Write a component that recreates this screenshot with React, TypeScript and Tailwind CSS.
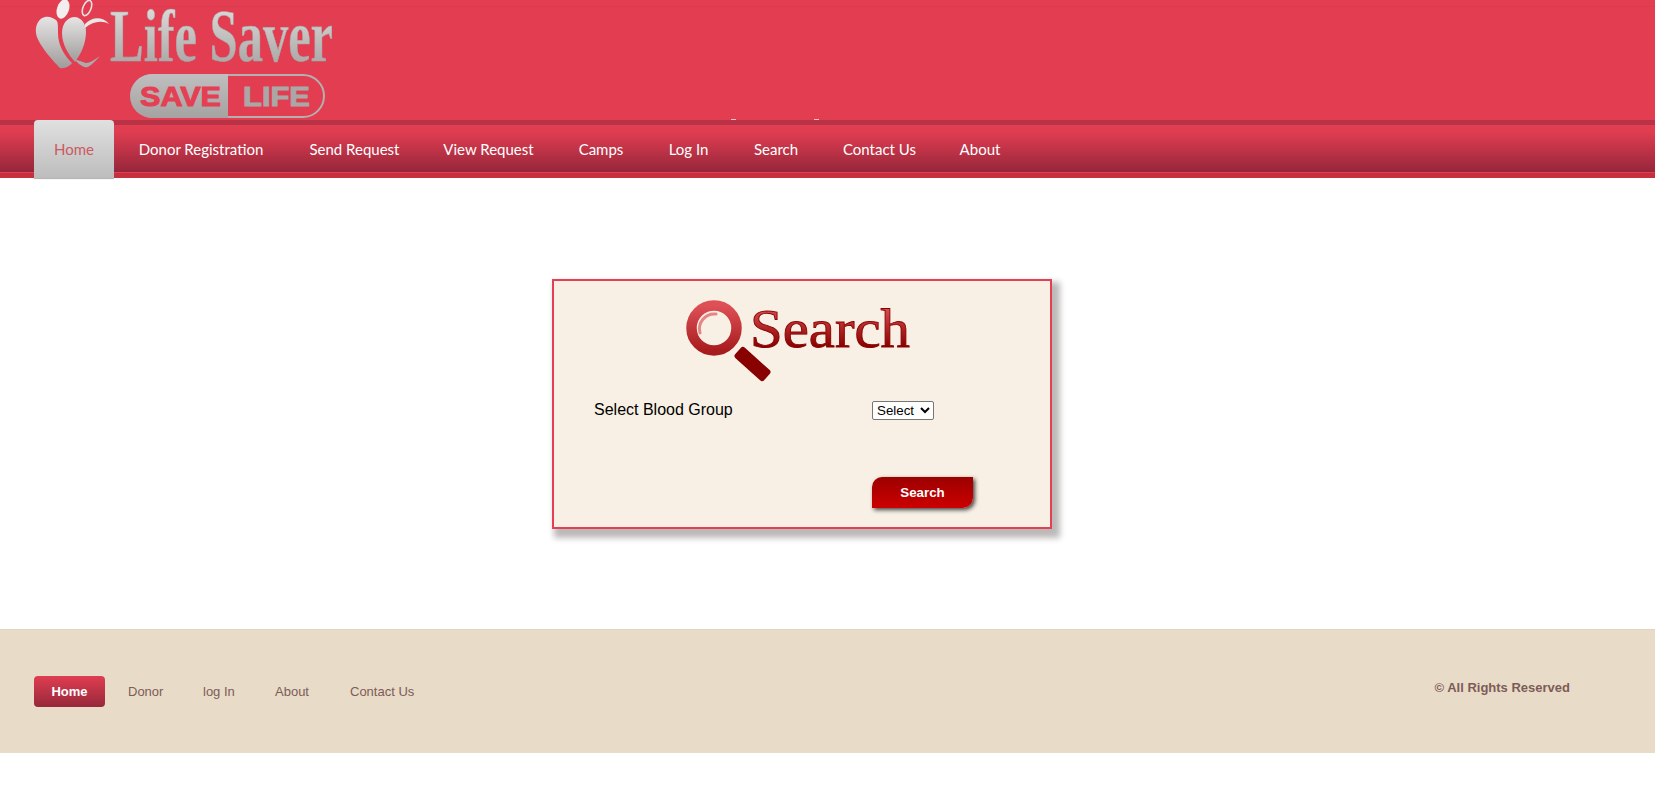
import React from "react";

const navItems = [
  { label: "Donor Registration", cls: "ml-[25px] w-[124px]" },
  { label: "Send Request", cls: "ml-[46px] w-[91px]" },
  { label: "View Request", cls: "ml-[44px] w-[89px]" },
  { label: "Camps", cls: "ml-[45px] w-[46px]" },
  { label: "Log In", cls: "ml-[44px] w-[41px]" },
  { label: "Search", cls: "ml-[44px] w-[46px]" },
  { label: "Contact Us", cls: "ml-[44px] w-[73px]" },
  { label: "About", cls: "ml-[44px] w-[40px]" },
];

const footerItems = [
  { label: "Donor", cls: "ml-[23px] w-[35px]" },
  { label: "log In", cls: "ml-[40px] w-[32px]" },
  { label: "About", cls: "ml-[40px] w-[35px]" },
  { label: "Contact Us", cls: "ml-[40px] w-[64px]" },
];

function Logo() {
  return (
    <svg width="360" height="120" viewBox="0 0 360 120" className="block">
      <defs>
        <linearGradient id="silver" x1="0" y1="0" x2="0" y2="1">
          <stop offset="0" stopColor="#e6e4e4" />
          <stop offset="1" stopColor="#a09c9c" />
        </linearGradient>
        <linearGradient id="silver2" x1="0" y1="0" x2="0" y2="1">
          <stop offset="0" stopColor="#c0bebe" />
          <stop offset="1" stopColor="#a5a2a2" />
        </linearGradient>
      </defs>
      <ellipse cx="63" cy="9" rx="6" ry="10" transform="rotate(18 63 9)" fill="#f3eeee" />
      <ellipse cx="87" cy="8" rx="4" ry="8" transform="rotate(22 87 8)" fill="none" stroke="#e4e2e2" strokeWidth="1.6" />
      <path d="M45 17 C39 18 35 25 36 33 C37 43 52 60 60 68 C65 69 70 66 72 63 C64 55 58 45 58 33 C58 27 58 23 57 21 C54 18 49 16 45 17 Z" fill="url(#silver)" />
      <path d="M75 17 C68 17 62 23 62 33 C62 44 68 54 75 62 C81 54 86 43 86 32 C86 24 82 18 75 17 Z" fill="url(#silver)" />
      <path d="M74 59 C80 66 85 68 88 67 C92 65 96 60 100 56 C94 60 90 63 86 63 C82 62 78 60 74 59 Z" fill="#aeaaaa" />
      <path d="M85 24 C92 17 102 16 109 24 C102 20 93 21 85 28 Z" fill="#e8e6e6" />
      <text x="110" y="61" fontFamily="'Liberation Serif', serif" fontWeight="700" fontSize="74" fill="url(#silver)" stroke="#aaa6a6" strokeWidth="0.6" textLength="223" lengthAdjust="spacingAndGlyphs">Life Saver</text>
      <rect x="132" y="75" width="192" height="42" rx="21" fill="none" stroke="#b3b0b0" strokeWidth="2" />
      <path d="M228 74 H152 A21.5 21.5 0 0 0 152 118 H228 Z" fill="url(#silver2)" />
      <text x="140" y="106" fontFamily="'Liberation Sans', sans-serif" fontWeight="700" fontSize="27" fill="#e43f53" stroke="#e43f53" strokeWidth="1" textLength="81" lengthAdjust="spacingAndGlyphs">SAVE</text>
      <text x="243" y="106" fontFamily="'Liberation Sans', sans-serif" fontWeight="700" fontSize="27" fill="#aaa7a7" stroke="#aaa7a7" strokeWidth="1" textLength="67" lengthAdjust="spacingAndGlyphs">LIFE</text>
    </svg>
  );
}

function SearchLogo() {
  return (
    <svg width="290" height="110" viewBox="0 0 290 110" className="block">
      <defs>
        <linearGradient id="red" x1="0" y1="0" x2="0" y2="1">
          <stop offset="0.1" stopColor="#e05558" />
          <stop offset="0.8" stopColor="#8a0000" />
        </linearGradient>
        <linearGradient id="ring" x1="0" y1="0" x2="0" y2="1">
          <stop offset="0" stopColor="#dd5055" />
          <stop offset="1" stopColor="#a81c20" />
        </linearGradient>
      </defs>
      <circle cx="76" cy="47" r="22.5" fill="none" stroke="url(#ring)" strokeWidth="10.5" />
      <path d="M62 52 A15 15 0 0 1 78 33" fill="none" stroke="#e58585" strokeWidth="3" strokeLinecap="round" />
      <rect x="95" y="76" width="39" height="14" rx="3" transform="rotate(42 114.5 83)" fill="#880000" />
      <text x="112" y="66" fontFamily="'Liberation Serif', serif" fontSize="55" fill="url(#red)" stroke="#8a0000" strokeWidth="0.9" textLength="160" lengthAdjust="spacingAndGlyphs">Search</text>
    </svg>
  );
}

export default function App() {
  return (
    <div className="min-h-[801px] bg-white font-['Liberation_Sans',Arial,sans-serif]">
      <header className="relative h-[120px] bg-[linear-gradient(to_bottom,#e23d50_0,#e23d50_6px,#dc3b4e_6px,#dc3b4e_7px,#e23d50_7px)]">
        <div className="h-[120px] overflow-hidden">
          <Logo />
        </div>
        <span className="absolute left-[731px] bottom-0 h-[1px] w-[5px] bg-[#f3c4c9]" />
        <span className="absolute left-[814px] bottom-0 h-[1px] w-[5px] bg-[#f3c4c9]" />
      </header>

      <nav className="flex h-[58px] items-stretch pl-[34px] font-['Lato',sans-serif] text-[15px] bg-[linear-gradient(to_bottom,#b83345_0,#b83345_5px,#e23d50_5px,#e03d51_12px,#96263a_52px,#e23d50_52px,#e23d50_53px,#c62f3e_53px,#c62f3e_58px)]">
        <a className="flex w-[80px] items-center justify-center rounded-t-[4px] bg-[linear-gradient(to_bottom,#e0e0e0,#bdbdbd)] pt-[1px] text-[#cc5a62] shadow-[0_1px_1px_rgba(120,120,120,0.6)]">
          Home
        </a>
        {navItems.map((item) => (
          <a key={item.label} className={`flex items-center justify-center whitespace-nowrap pt-[1px] text-white ${item.cls}`}>
            {item.label}
          </a>
        ))}
      </nav>

      <main className="h-[451px] pt-[101px] pl-[552px]">
        <section className="h-[250px] w-[500px] border-2 border-[#e43f53] bg-[#f8f0e4] shadow-[5px_6px_6px_3px_#bdb9b9]">
          <div className="h-[110px] pl-[84px]">
            <SearchLogo />
          </div>
          <div className="mt-[10px] grid grid-cols-[318px_1fr]">
            <div className="pl-[40px] text-[16px] leading-[18px] text-black">Select Blood Group</div>
            <div>
              <select className="block h-[19px] w-[62px] appearance-auto rounded-[2px] border border-[#767676] bg-white text-[13.33px] leading-none text-black">
                <option>Select</option>
              </select>
            </div>
          </div>
          <div className="mt-[57px] grid grid-cols-[318px_1fr]">
            <div />
            <button className="h-[31px] w-[101px] rounded-tl-[10px] rounded-br-[10px] bg-[linear-gradient(to_bottom,#9c0000,#cc0000)] text-[13.33px] font-bold text-white shadow-[2px_2px_4px_#444]">
              Search
            </button>
          </div>
        </section>
      </main>

      <footer className="flex h-[124px] items-center justify-between border-t border-[#e0d3bf] bg-[#e8dbc8] pl-[34px] pr-[85px]">
        <div className="flex items-center text-[13px] text-[#7d5c57]">
          <a className="flex h-[31px] w-[71px] items-center justify-center rounded-[4px] bg-[linear-gradient(to_bottom,#e03d51,#96283a)] font-bold text-[13px] text-white">
            Home
          </a>
          {footerItems.map((item) => (
            <a key={item.label} className={`whitespace-nowrap ${item.cls}`}>
              {item.label}
            </a>
          ))}
        </div>
        <p className="mb-[8px] text-[13px] font-bold text-[#7d5c57]">© All Rights Reserved</p>
      </footer>
    </div>
  );
}
